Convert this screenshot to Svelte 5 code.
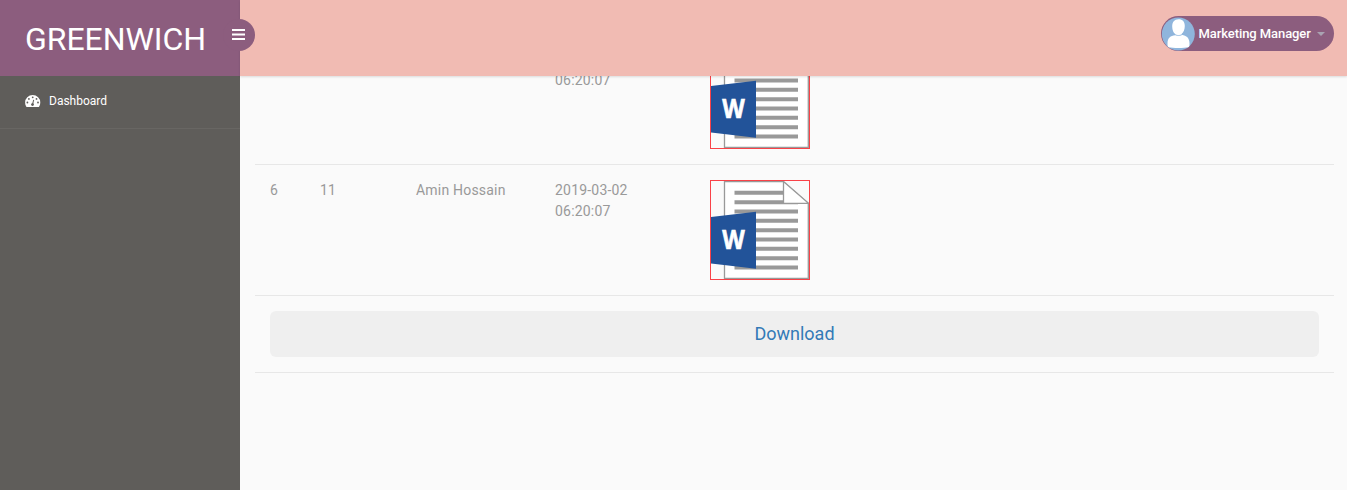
<script>
  const rows = [
    { no: '', id: '', author: '', date: '', time: '06:20:07' },
    { no: 6, id: 11, author: 'Amin Hossain', date: '2019-03-02', time: '06:20:07' }
  ];
  const lines = [11.3, 20.7, 30, 39.3, 48.7, 58, 67.3, 76.7, 86];
</script>

<div class="page">
  <aside>
    <div class="brand">GREENWICH</div>
    <nav>
      <a class="item" href="#dashboard">
        <svg width="16" height="13" viewBox="0 0 16 13">
          <path fill="#fff" d="M7.700 0A7.600 7.400 0 0 0 .1 7.500c0 1.500.4 2.900 1.100 4q.3.500.8.500H13.400q.5 0 .8-.5c.7-1.100 1.100-2.500 1.100-4A7.600 7.400 0 0 0 7.700 0z" />
          <g fill="#5f5d5a">
            <circle cx="7.700" cy="2.300" r=".9" />
            <circle cx="3.900" cy="3.900" r=".9" />
            <circle cx="11.500" cy="3.900" r=".9" />
            <circle cx="2.400" cy="7.500" r=".9" />
            <circle cx="13" cy="7.500" r=".9" />
            <circle cx="7.500" cy="9.600" r="1.400" />
            <path d="M8.200 4.800l.9.250-1 4.500-1-.3z" />
          </g>
        </svg>
        <span>Dashboard</span>
      </a>
    </nav>
  </aside>

  <header>
    <button class="toggle" aria-label="Menu">
      <svg width="13" height="11" viewBox="0 0 13 11"><path fill="#fff" d="M0 0h13v2H0zM0 4.500h13v2H0zM0 9h13v2H0z" /></svg>
    </button>
    <div class="user">
      <svg class="avatar" width="34" height="34" viewBox="0 0 34 34">
        <circle cx="17.300" cy="17" r="16.500" fill="#8fb5dc" />
        <path fill="#fff" d="M17.500 2.300c-4.200 0-6.300 3-6.300 7.200 0 3.600 1.400 6.300 3 7.800v1C9.500 18.600 6.500 21 6.500 26.500c0 2.500.1 3.200 1.300 3.800C11.500 31.300 23.500 31.300 27.200 30.300 28.400 29.700 28.500 29 28.500 26.500c0-5.500-3-7.900-7.700-8.700v-1c1.600-1.500 3-4.200 3-7.800C23.800 4.800 21.700 2.300 17.500 2.300z" />
        <path fill="none" stroke="#8fb5dc" stroke-width=".9" d="M13 16.800c2.500 2.300 6.500 2.300 9 0" />
      </svg>
      <span>Marketing Manager</span>
      <i class="caret"></i>
    </div>
  </header>

  <main>
    <div class="table">
      {#each rows as row}
        <div class="row">
          <div>{row.no}</div>
          <div>{row.id}</div>
          <div>{row.author}</div>
          <div>{row.date}<br />{row.time}</div>
          <div>
            <svg class="doc" width="100" height="100" viewBox="0 0 100 100">
              <path fill="#fff" stroke="#999" stroke-width="1.300" d="M14.500 1.500H73L98.300 23V98.300H14.500z" />
              {#each lines as y}
                <path stroke="#999" stroke-width="4" d="M24.500 {y + 1.500}H88" />
              {/each}
              <path fill="#fafafa" d="M73.500 1H99V23z" />
              <path fill="#fff" stroke="#999" stroke-width="1.300" d="M73.500 1.500V23.300H98.500z" />
              <path fill="#225399" d="M1 37L46 31.800V88.800L1 83.500z" />
              <text x="23.500" y="69.300" text-anchor="middle" textLength="22.500" lengthAdjust="spacingAndGlyphs">W</text>
              <rect x=".5" y=".5" width="99" height="99" fill="none" stroke="#f94248" />
            </svg>
          </div>
        </div>
      {/each}
      <div class="footer"><a href="#download">Download</a></div>
    </div>
  </main>
</div>

<style>
  :global(body) { margin: 0; overflow: hidden; }
  .page {
    display: grid;
    grid-template: 76px 414px / 240px 1fr;
    width: 100%;
    height: 490px;
    overflow: hidden;
    background: #fafafa;
    color: #999;
    font: 14px/21px Roboto, sans-serif;
  }
  a { text-decoration: none; }
  aside { grid-row: 1 / 3; background: #5f5d5a; }
  .brand {
    box-sizing: border-box;
    height: 76px;
    padding: 3px 0 0 25px;
    background: #8c5d7e;
    color: #fff;
    font-size: 32px;
    line-height: 73px;
    letter-spacing: -.05px;
    white-space: nowrap;
  }
  .item {
    display: flex;
    align-items: center;
    box-sizing: border-box;
    height: 53px;
    padding: 0 25px 2px;
    border-bottom: 1px solid #686663;
    color: #fff;
    font-size: 12px;
    gap: 8px;
  }
  .item span { padding-top: 1px; }
  header {
    position: relative;
    z-index: 1;
    display: flex;
    align-items: flex-start;
    justify-content: space-between;
    box-sizing: border-box;
    padding: 16px 13px 0 0;
    background: #f1bbb3;
    box-shadow: 0 1px 2px rgba(0, 0, 0, .12);
  }
  .toggle {
    display: flex;
    align-items: center;
    width: 32px;
    height: 32px;
    margin: 3px 0 0 -17px;
    padding: 0 0 1px 9px;
    border: 0;
    border-radius: 50%;
    background: #8c5d7e;
  }
  .user {
    display: flex;
    align-items: center;
    box-sizing: border-box;
    width: 173px;
    height: 35px;
    border-radius: 18px;
    background: #8c5d7e;
    color: #fff;
    font-size: 13px;
    font-weight: 500;
    white-space: nowrap;
  }
  .user span { width: 118px; margin-left: 3.500px; letter-spacing: -.08px; }
  .caret {
    border: 4px solid transparent;
    border-top-color: #a9a3b2;
    border-bottom: 0;
    margin-top: 1px;
  }
  main {
    display: flex;
    flex-direction: column;
    justify-content: flex-end;
    box-sizing: border-box;
    min-height: 0;
    padding: 0 13px 117px 15px;
    overflow: hidden;
  }
  .table { flex-shrink: 0; border-bottom: 1px solid #e7e7e7; }
  .row {
    display: grid;
    grid-template-columns: 50px 96px 139px 155px 100px;
    box-sizing: border-box;
    height: 131px;
    padding: 15px;
    border-top: 1px solid #e7e7e7;
    letter-spacing: .2px;
  }
  .doc { display: block; }
  .doc text { fill: #fff; stroke: #fff; stroke-width: .6px; font: bold 26px "Open Sans", sans-serif; letter-spacing: 0; }
  .footer { padding: 15px; border-top: 1px solid #e7e7e7; }
  .footer a {
    display: block;
    height: 46px;
    border-radius: 6px;
    background: #efefef;
    color: #337ab7;
    font-size: 18px;
    line-height: 46px;
    text-align: center;
  }
</style>
